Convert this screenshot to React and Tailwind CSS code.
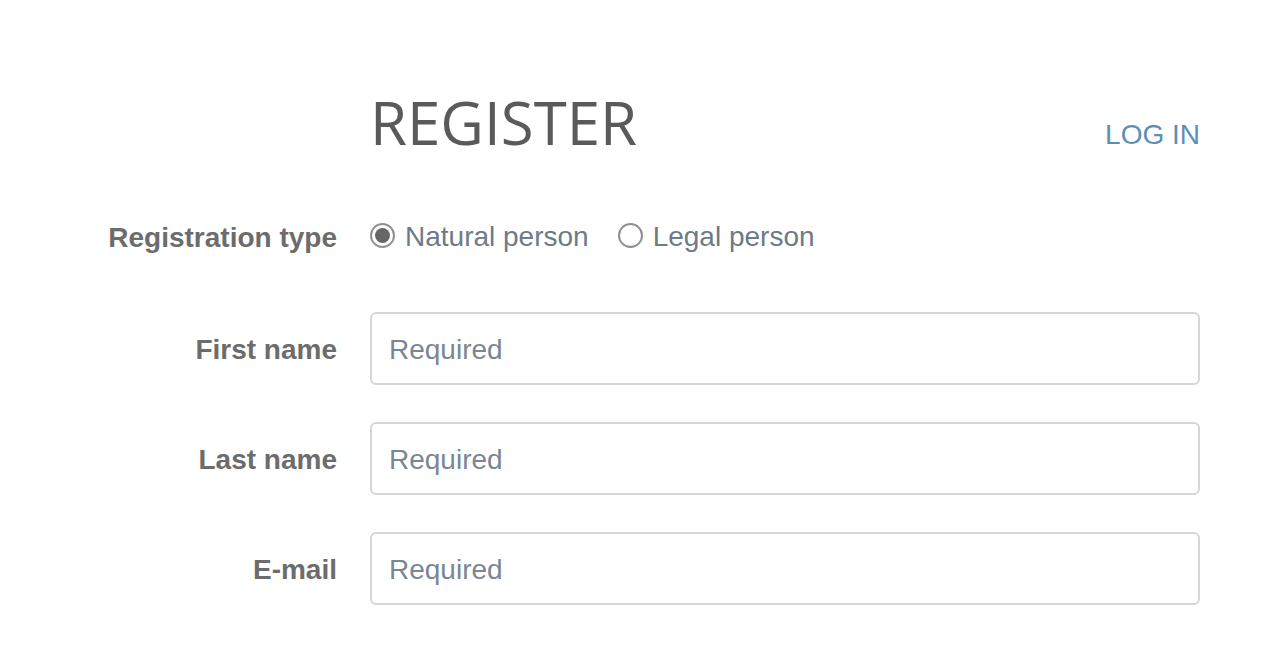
import React from "react";

function Radio({ checked, label }) {
  return (
    <label className="flex items-center gap-[10px] h-[32px]">
      <span className="w-[25px] h-[25px] rounded-full border-[2px] border-[#8f8f8f] flex items-center justify-center bg-white">
        {checked && <span className="w-[15px] h-[15px] rounded-full bg-[#666666]" />}
      </span>
      <span className="pt-[3px]">{label}</span>
    </label>
  );
}

function Field({ label }) {
  return (
    <div className="flex items-center">
      <div className="w-[337px] pt-[2px] text-right font-bold text-[#6c6c6c] text-[28px] leading-[32px]">{label}</div>
      <div className="ml-[33px] w-[830px] h-[73px] border-[2px] border-[#d6d6d6] rounded-[6px] flex items-center px-[17px] pt-[2px] text-[28px] text-[#7b8693]">
        Required
      </div>
    </div>
  );
}

export default function App() {
  return (
    <div className="w-[1275px] h-[661px] bg-white overflow-hidden" style={{ fontFamily: '"Liberation Sans", Arial, sans-serif' }}>
      <div className="pt-[86px] flex items-end">
        <div className="ml-[370px] text-[#5a5a5a] text-[60px] leading-[72px]" style={{ fontFamily: '"Open Sans", sans-serif' }}>
          REGISTER
        </div>
        <div className="ml-auto mr-[75px] mb-[7px] text-[#5b8fb5] text-[28px] leading-[32px]">LOG IN</div>
      </div>
      <div className="mt-[61px] flex items-start h-[32px]">
        <div className="w-[337px] mt-[3px] text-right font-bold text-[#6c6c6c] text-[28px] leading-[32px]">Registration type</div>
        <div className="ml-[33px] flex items-center gap-[29px] text-[28px] leading-[32px] text-[#6e7a88]">
          <Radio checked label="Natural person" />
          <Radio label="Legal person" />
        </div>
      </div>
      <div className="mt-[61px] flex flex-col gap-[37px]">
        <Field label="First name" />
        <Field label="Last name" />
        <Field label="E-mail" />
      </div>
    </div>
  );
}
